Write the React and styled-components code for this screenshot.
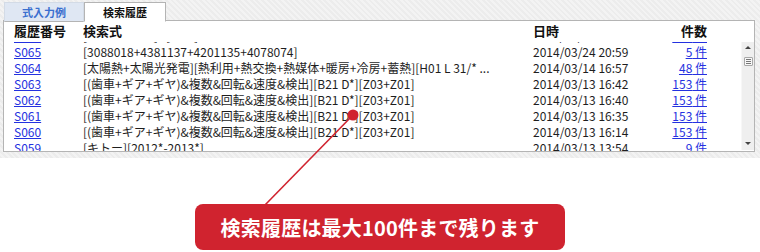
import React, { useEffect, useRef } from 'react';
import styled, { createGlobalStyle } from 'styled-components';

const GlobalStyle = createGlobalStyle`
  html, body {
    margin: 0;
    padding: 0;
    background: #ffffff;
  }
  body {
    font-family: 'Noto Sans CJK JP', 'Liberation Sans', sans-serif;
  }
`;

const Page = styled.div`
  position: relative;
  width: 760px;
  height: 252px;
  overflow: hidden;
  background: #ffffff;
`;

const Shelf = styled.div`
  background: repeating-linear-gradient(45deg, #ececec 0 2px, #f3f3f3 2px 4px);
  padding: 2px 5px 6px 3px;
`;

const TabBar = styled.div`
  display: flex;
  height: 19px;
  padding-left: 1px;
  position: relative;
  z-index: 1;
`;

const Tab = styled.div`
  width: ${props => props.width}px;
  display: flex;
  align-items: center;
  justify-content: center;
  font-size: 11px;
  font-weight: 700;
  box-sizing: border-box;
  color: ${props => (props.active ? '#111111' : '#3a6fcf')};
  background: ${props => (props.active ? '#ffffff' : '#dfe7f3')};
  border: 1px solid ${props => (props.active ? '#b4b4b4' : '#d3dbe6')};
  border-bottom: ${props => (props.active ? '1px solid #ffffff' : '1px solid #b4b4b4')};
  height: 20px;
`;

const Panel = styled.div`
  background: #ffffff;
  border: 1px solid #b4b4b4;
  margin-top: -1px;
`;

const Grid = styled.div`
  display: grid;
  grid-template-columns: 69px 450px 114px 60px;
  padding-left: 10px;
  align-items: center;
`;

const HeadRow = styled(Grid)`
  height: 21px;
  font-size: 13px;
  font-weight: 700;
  color: #111111;
  align-items: start;
`;

const HeadCell = styled.div`
  text-align: ${props => (props.right ? 'right' : 'left')};
  line-height: 20px;
`;

const Body = styled.div`
  display: flex;
  height: 109px;
`;

const Viewport = styled.div`
  flex: 1;
  overflow: hidden;
`;

const Row = styled(Grid)`
  height: 16px;
  font-size: 12px;
  color: #1e1e1e;
  white-space: nowrap;
`;

const Cell = styled.div`
  line-height: 16px;
  overflow: hidden;
  text-align: ${props => (props.right ? 'right' : 'left')};
`;

const Link = styled.a`
  color: #2431e0;
  text-decoration: underline;
  cursor: pointer;
`;

const Scrollbar = styled.div`
  width: 13px;
  margin-bottom: 1px;
  background: #efefef;
  border-left: 1px solid #f7f7f7;
  display: flex;
  flex-direction: column;
  align-items: center;
  padding-top: 4px;
  box-sizing: border-box;
`;

const Arrow = styled.div`
  width: 0;
  height: 0;
  border-left: 3px solid transparent;
  border-right: 3px solid transparent;
  ${props => (props.down
    ? 'border-top: 3px solid #444444; margin-top: auto; margin-bottom: 5px;'
    : 'border-bottom: 3px solid #444444;')}
`;

const Thumb = styled.div`
  margin-top: 8px;
  width: 9px;
  height: 9px;
  box-sizing: border-box;
  border: 1px solid #a8a8a8;
  border-radius: 1px;
  background: #f8f8f8;
  display: flex;
  flex-direction: column;
  justify-content: center;
  align-items: center;
  gap: 1px;
`;

const Grip = styled.span`
  display: block;
  width: 5px;
  height: 1px;
  background: #777777;
`;

const Note = styled.div`
  display: flex;
  justify-content: center;
  margin-top: 46px;
`;

const Callout = styled.div`
  width: 370px;
  height: 46px;
  border-radius: 8px;
  background: #d0232f;
  color: #ffffff;
  font-family: 'Noto Sans CJK JP', sans-serif;
  font-size: 20px;
  font-weight: 700;
  display: flex;
  align-items: center;
  justify-content: center;
  letter-spacing: 0.2px;
`;

const Pointer = styled.svg`
  position: absolute;
  left: 0;
  top: 0;
  pointer-events: none;
`;

const gear = '[(歯車+ギア+ギヤ)&複数&回転&速度&検出][B21 D*][Z03+Z01]';

const rows = [
  { id: 'S066', q: '[電動+モータ]&[制御]', date: '2014/03/25 09:12', count: '153' },
  { id: 'S065', q: '[3088018+4381137+4201135+4078074]', date: '2014/03/24 20:59', count: '5' },
  { id: 'S064', q: '[太陽熱+太陽光発電][熱利用+熱交換+熱媒体+暖房+冷房+蓄熱][H01 L 31/* ...', date: '2014/03/14 16:57', count: '48' },
  { id: 'S063', q: gear, date: '2014/03/13 16:42', count: '153' },
  { id: 'S062', q: gear, date: '2014/03/13 16:40', count: '153' },
  { id: 'S061', q: gear, date: '2014/03/13 16:35', count: '153' },
  { id: 'S060', q: gear, date: '2014/03/13 16:14', count: '153' },
  { id: 'S059', q: '[キトー][2012*-2013*]', date: '2014/03/13 13:54', count: '9' },
  { id: 'S058', q: '[キトー]', date: '2014/03/13 13:50', count: '21' },
];

export default function App() {
  const viewRef = useRef(null);

  useEffect(() => {
    // the list is scrolled a little, so only the foot of the row above S065 peeks out
    if (viewRef.current) viewRef.current.scrollTop = 14;
  }, []);

  return (
    <Page>
      <GlobalStyle />
      <Shelf>
        <TabBar>
          <Tab width={80}>式入力例</Tab>
          <Tab width={82} active>検索履歴</Tab>
        </TabBar>
        <Panel>
          <HeadRow>
            <HeadCell>履歴番号</HeadCell>
            <HeadCell>検索式</HeadCell>
            <HeadCell>日時</HeadCell>
            <HeadCell right>件数</HeadCell>
          </HeadRow>
          <Body>
            <Viewport ref={viewRef}>
              {rows.map(r => (
                <Row key={r.id}>
                  <Cell><Link>{r.id}</Link></Cell>
                  <Cell>{r.q}</Cell>
                  <Cell>{r.date}</Cell>
                  <Cell right><Link>{r.count} 件</Link></Cell>
                </Row>
              ))}
            </Viewport>
            <Scrollbar>
              <Arrow />
              <Thumb>
                <Grip />
                <Grip />
                <Grip />
              </Thumb>
              <Arrow down />
            </Scrollbar>
          </Body>
        </Panel>
      </Shelf>
      <Note>
        <Callout>検索履歴は最大100件まで残ります</Callout>
      </Note>
      <Pointer width="760" height="252" viewBox="0 0 760 252">
        <line x1="353" y1="115" x2="265" y2="205" stroke="#d0232f" strokeWidth="1.6" />
        <circle cx="353" cy="115" r="5.5" fill="#d0232f" />
      </Pointer>
    </Page>
  );
}
